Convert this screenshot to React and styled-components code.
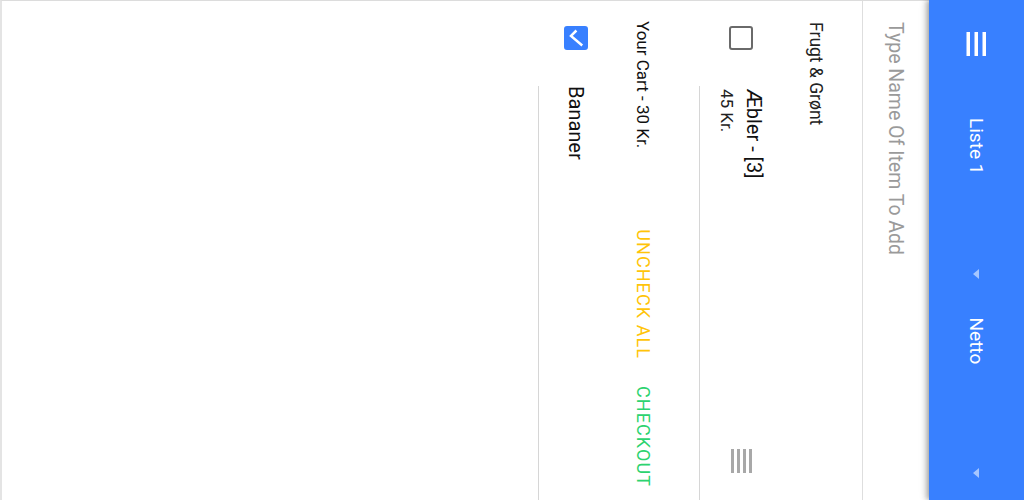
import styled, { createGlobalStyle } from 'styled-components';

const GlobalStyle = createGlobalStyle`
  html, body {
    margin: 0;
    padding: 0;
    background: #fff;
    overflow: hidden;
  }
  * {
    box-sizing: border-box;
  }
`;

// the screenshot is a phone screen turned on its side, so the app is laid out
// upright at 500x1024 and turned a quarter clockwise
const Stage = styled.div`
  width: 1024px;
  height: 500px;
  overflow: hidden;
  background: #fff;
`;

const Phone = styled.div`
  width: 500px;
  height: 1024px;
  transform-origin: 0 0;
  transform: translateX(1024px) rotate(90deg);
  display: flex;
  flex-direction: column;
  font-family: Roboto, 'Liberation Sans', sans-serif;
  color: #111;
`;

const Header = styled.header`
  height: 95px;
  flex-shrink: 0;
  background: #3880ff;
  display: flex;
  align-items: center;
  padding-left: 32px;
  position: relative;
  z-index: 2;
  box-shadow: 0 2px 4px -1px rgba(0, 0, 0, 0.2), 0 4px 5px 0 rgba(0, 0, 0, 0.14),
    0 1px 10px 0 rgba(0, 0, 0, 0.12);
`;

const MenuButton = styled.button`
  width: 24px;
  height: 24px;
  padding: 0;
  border: 0;
  background: none;
  display: flex;
  color: #fff;
`;

const Selects = styled.div`
  flex: 1;
  margin-left: 44px;
  display: flex;
`;

const Select = styled.div`
  flex: 1;
  display: flex;
  align-items: center;
  justify-content: space-between;
  padding: 0 22px 0 ${({ $pad }) => $pad}px;
  color: #fff;
  font-size: 19px;
`;

const Caret = styled.span`
  width: 0;
  height: 0;
  border-left: 5px solid transparent;
  border-right: 5px solid transparent;
  border-top: 6px solid rgba(255, 255, 255, 0.55);
`;

const Content = styled.main`
  flex: 1;
  border-left: 1px solid #dcdcdc;
  border-bottom: 2px solid #e4e4e4;
`;

const AddRow = styled.div`
  height: 67px;
  display: flex;
  align-items: center;
  padding-left: 21px;
  border-bottom: 1px solid #dedede;
`;

const AddInput = styled.input`
  flex: 1;
  border: 0;
  outline: none;
  background: none;
  font-family: inherit;
  font-size: 19.5px;
  padding: 0;
  color: #111;

  &::placeholder {
    color: #9a9a9a;
  }
`;

const ListHeader = styled.div`
  height: 79px;
  padding: 36px 21px 0;
  font-size: 17.5px;
  line-height: 20px;
  color: #222;
`;

const Item = styled.div`
  height: ${({ $height }) => $height}px;
  display: flex;
  align-items: stretch;
  padding-left: 25px;
`;

const Box = styled.span`
  align-self: center;
  width: 24px;
  height: 24px;
  margin-right: 36px;
  border-radius: 3px;
  border: 2px solid ${({ $checked }) => ($checked ? '#3880ff' : '#6a6a6a')};
  background: ${({ $checked }) => ($checked ? '#3880ff' : 'transparent')};
  display: flex;
  align-items: center;
  justify-content: center;
  flex-shrink: 0;
`;

const ItemInner = styled.div`
  flex: 1;
  display: flex;
  align-items: center;
  padding: 0 27px 0 ${({ $pad }) => $pad}px;
  border-bottom: 1px solid #d6d6d6;
`;

const ItemText = styled.div`
  flex: 1;
  display: flex;
  flex-direction: column;
`;

const Label = styled.span`
  font-size: 20px;
  line-height: 22px;
  color: #111;
`;

const Price = styled.span`
  margin-top: 7px;
  font-size: 17px;
  line-height: 19px;
  color: #222;
`;

const CartRow = styled.div`
  height: 85px;
  display: flex;
  align-items: flex-start;
  padding: 45px 13px 0 20px;
`;

const CartTotal = styled.span`
  flex: 1;
  font-size: 17px;
  line-height: 22px;
  color: #111;
`;

const Actions = styled.div`
  display: flex;
  gap: 27px;
`;

const TextButton = styled.button`
  border: 0;
  padding: 0;
  background: none;
  font-family: inherit;
  font-size: 18px;
  line-height: 22px;
  letter-spacing: 0.06em;
  text-transform: uppercase;
  color: ${({ $color }) => $color};
`;

function MenuIcon() {
  return (
    <svg width="24" height="24" viewBox="0 0 24 24">
      <rect x="0" y="2" width="24" height="3.5" fill="#fff" />
      <rect x="0" y="10" width="24" height="3.5" fill="#fff" />
      <rect x="0" y="18" width="24" height="3.5" fill="#fff" />
    </svg>
  );
}

function ReorderIcon() {
  return (
    <svg width="24" height="24" viewBox="0 0 24 24">
      <rect x="0" y="1" width="24" height="3" fill="#a8a8a8" />
      <rect x="0" y="7" width="24" height="3" fill="#a8a8a8" />
      <rect x="0" y="13" width="24" height="3" fill="#a8a8a8" />
      <rect x="0" y="19" width="24" height="3" fill="#a8a8a8" />
    </svg>
  );
}

function CheckMark() {
  return (
    <svg width="20" height="20" viewBox="0 0 24 24">
      <path d="M3 11.5 L9.5 18 L21 4.5" fill="none" stroke="#fff" strokeWidth="3" />
    </svg>
  );
}

function App() {
  return (
    <>
      <GlobalStyle />
      <Stage>
        <Phone>
          <Header>
            <MenuButton aria-label="menu">
              <MenuIcon />
            </MenuButton>
            <Selects>
              <Select $pad={18}>
                <span>Liste 1</span>
                <Caret />
              </Select>
              <Select $pad={17}>
                <span>Netto</span>
                <Caret />
              </Select>
            </Selects>
          </Header>
          <Content>
            <AddRow>
              <AddInput placeholder="Type Name Of Item To Add" />
            </AddRow>
            <ListHeader>Frugt &amp; Grønt</ListHeader>
            <Item $height={84}>
              <Box />
              <ItemInner $pad={3}>
                <ItemText>
                  <Label>Æbler - [3]</Label>
                  <Price>45 Kr.</Price>
                </ItemText>
                <ReorderIcon />
              </ItemInner>
            </Item>
            <CartRow>
              <CartTotal>Your Cart - 30 Kr.</CartTotal>
              <Actions>
                <TextButton $color="#ffc409">Uncheck all</TextButton>
                <TextButton $color="#2dd36f">Checkout</TextButton>
              </Actions>
            </CartRow>
            <Item $height={76}>
              <Box $checked>
                <CheckMark />
              </Box>
              <ItemInner $pad={0}>
                <ItemText>
                  <Label>Bananer</Label>
                </ItemText>
              </ItemInner>
            </Item>
          </Content>
        </Phone>
      </Stage>
    </>
  );
}

export default App;
